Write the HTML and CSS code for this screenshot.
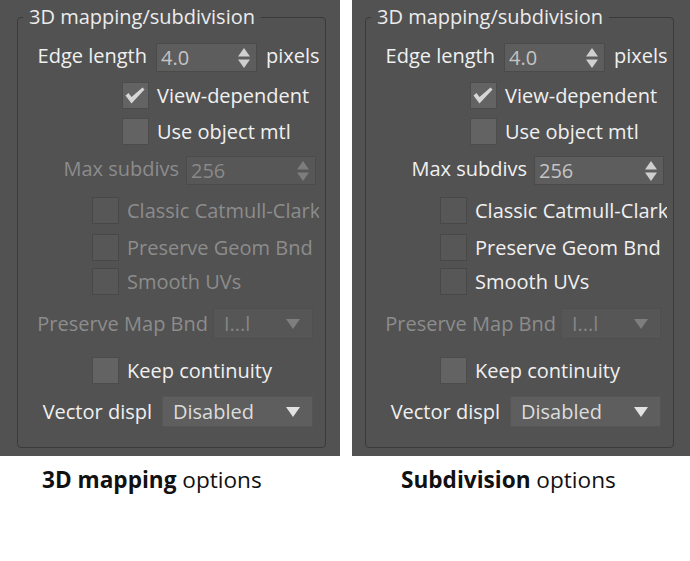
FILE: index.html
```html
<!DOCTYPE html>
<html>
<head>
<meta charset="utf-8">
<link rel="stylesheet" href="styles.css">
</head>
<body>
<div class="shots">
  <div class="panel p-left">
    <div class="group">
      <div class="legend">3D mapping/subdivision</div>
      <div class="row r1">
        <span class="lbl w-edge">Edge length</span>
        <div class="spin w-edge-sp"><span class="val">4.0</span>
          <svg class="arr" width="12" height="20" viewBox="0 0 12 20"><polygon points="0,8.5 6,0 12,8.5"/><polygon points="0,11.5 12,11.5 6,20"/></svg>
        </div>
        <span class="lbl unit">pixels</span>
      </div>
      <div class="row r2 in-top">
        <span class="cb"><svg width="27" height="27" viewBox="0 0 27 27"><path class="chk" d="M3.5 13.5 L6.5 11 L9.5 15 L20.5 5.5 L22.5 7.5 L9.5 21.5 Z"/></svg></span>
        <span class="lbl">View-dependent</span>
      </div>
      <div class="row r3 in-top">
        <span class="cb"></span>
        <span class="lbl">Use object mtl</span>
      </div>
      <div class="row r4 off">
        <span class="lbl w-max">Max subdivs</span>
        <div class="spin w-max-sp"><span class="val">256</span>
          <svg class="arr" width="12" height="20" viewBox="0 0 12 20"><polygon points="0,8.5 6,0 12,8.5"/><polygon points="0,11.5 12,11.5 6,20"/></svg>
        </div>
      </div>
      <div class="row r5 in-sub off">
        <span class="cb"></span>
        <span class="lbl">Classic Catmull-Clark</span>
      </div>
      <div class="row r6 in-sub off">
        <span class="cb"></span>
        <span class="lbl">Preserve Geom Bnd</span>
      </div>
      <div class="row r7 in-sub off">
        <span class="cb"></span>
        <span class="lbl">Smooth UVs</span>
      </div>
      <div class="row r8 off">
        <span class="lbl w-pmb">Preserve Map Bnd</span>
        <div class="dd w-pmb-dd"><span class="val">I...l</span>
          <svg class="tri" width="14" height="10" viewBox="0 0 14 10"><polygon points="0,0 14,0 7,10"/></svg>
        </div>
      </div>
      <div class="row r9 in-sub">
        <span class="cb"></span>
        <span class="lbl">Keep continuity</span>
      </div>
      <div class="row r10">
        <span class="lbl w-vd">Vector displ</span>
        <div class="dd w-vd-dd"><span class="val">Disabled</span>
          <svg class="tri" width="14" height="10" viewBox="0 0 14 10"><polygon points="0,0 14,0 7,10"/></svg>
        </div>
      </div>
    </div>
  </div>
  <div class="panel p-right">
    <div class="group">
      <div class="legend">3D mapping/subdivision</div>
      <div class="row r1">
        <span class="lbl w-edge">Edge length</span>
        <div class="spin w-edge-sp"><span class="val">4.0</span>
          <svg class="arr" width="12" height="20" viewBox="0 0 12 20"><polygon points="0,8.5 6,0 12,8.5"/><polygon points="0,11.5 12,11.5 6,20"/></svg>
        </div>
        <span class="lbl unit">pixels</span>
      </div>
      <div class="row r2 in-top">
        <span class="cb"><svg width="27" height="27" viewBox="0 0 27 27"><path class="chk" d="M3.5 13.5 L6.5 11 L9.5 15 L20.5 5.5 L22.5 7.5 L9.5 21.5 Z"/></svg></span>
        <span class="lbl">View-dependent</span>
      </div>
      <div class="row r3 in-top">
        <span class="cb"></span>
        <span class="lbl">Use object mtl</span>
      </div>
      <div class="row r4">
        <span class="lbl w-max">Max subdivs</span>
        <div class="spin w-max-sp"><span class="val">256</span>
          <svg class="arr" width="12" height="20" viewBox="0 0 12 20"><polygon points="0,8.5 6,0 12,8.5"/><polygon points="0,11.5 12,11.5 6,20"/></svg>
        </div>
      </div>
      <div class="row r5 in-sub">
        <span class="cb dim"></span>
        <span class="lbl">Classic Catmull-Clark</span>
      </div>
      <div class="row r6 in-sub">
        <span class="cb dim"></span>
        <span class="lbl">Preserve Geom Bnd</span>
      </div>
      <div class="row r7 in-sub">
        <span class="cb dim"></span>
        <span class="lbl">Smooth UVs</span>
      </div>
      <div class="row r8 off">
        <span class="lbl w-pmb">Preserve Map Bnd</span>
        <div class="dd w-pmb-dd"><span class="val">I...l</span>
          <svg class="tri" width="14" height="10" viewBox="0 0 14 10"><polygon points="0,0 14,0 7,10"/></svg>
        </div>
      </div>
      <div class="row r9 in-sub">
        <span class="cb"></span>
        <span class="lbl">Keep continuity</span>
      </div>
      <div class="row r10">
        <span class="lbl w-vd">Vector displ</span>
        <div class="dd w-vd-dd"><span class="val">Disabled</span>
          <svg class="tri" width="14" height="10" viewBox="0 0 14 10"><polygon points="0,0 14,0 7,10"/></svg>
        </div>
      </div>
    </div>
  </div>
</div>
<div class="captions">
  <p class="cap cap-left"><b>3D mapping</b> options</p>
  <p class="cap cap-right"><b>Subdivision</b> options</p>
</div>
</body>
</html>
```

FILE: styles.css
```css
* { box-sizing: border-box; }
html, body { margin: 0; padding: 0; background: #ffffff; }
body { font-family: "Open Sans", "Noto Sans", sans-serif; }

.shots { display: flex; gap: 12px; }
.panel { height: 456px; background: #525252; padding-top: 17px; overflow: hidden; }
.p-left { width: 340px; padding-left: 17px; }
.p-right { width: 338px; padding-left: 13px; }

.group {
  width: 309px;
  border: 1px solid #3a3a3a;
  border-radius: 4px;
  padding: 0 6px 20px 0;
  font-size: 20px;
  color: #f0f0f0;
}
.legend {
  display: table;
  margin: -12px 0 0 5px;
  padding: 0 6px;
  height: 22px;
  line-height: 22px;
  background: #525252;
  color: #ececec;
  white-space: nowrap;
}

.row { display: flex; align-items: center; overflow: hidden; white-space: nowrap; }
.lbl { line-height: 22px; flex: none; }
.row.off .lbl { color: #8c8c8c; }

.r1 { margin-top: 15px; height: 29px; }
.r2 { margin-top: 10px; height: 27px; }
.r3 { margin-top: 9px; height: 27px; }
.r4 { margin-top: 11px; height: 29px; }
.r5 { margin-top: 12px; height: 27px; }
.r6 { margin-top: 10px; height: 27px; }
.r7 { margin-top: 7px; height: 27px; }
.r8 { margin-top: 13px; height: 31px; }
.r9 { margin-top: 18px; height: 27px; }
.r10 { margin-top: 12px; height: 31px; }

.r1 .lbl, .r4 .lbl { padding-bottom: 3px; }

.in-top { padding-left: 104px; }
.in-sub { padding-left: 74px; }
.in-top .lbl, .in-sub .lbl { margin-left: 8px; }

.w-edge { width: 129px; text-align: right; margin-right: 9px; }
.w-max { width: 161px; text-align: right; margin-right: 7px; }
.w-pmb { width: 190px; text-align: right; margin-right: 5px; }
.w-vd { width: 134px; text-align: right; margin-right: 10px; }
.unit { margin-left: 9px; }

.spin {
  height: 29px;
  display: flex;
  align-items: center;
  justify-content: space-between;
  padding: 0 6px 0 4px;
  background: #5d5d5d;
  border: 1px solid #4a4a4a;
  flex: none;
}
.w-edge-sp { width: 101px; }
.w-max-sp { width: 130px; }
.spin .val { color: #c4c4c4; line-height: 22px; }
.arr { fill: #cfcfcf; display: block; }
.row.off .spin { background: #575757; border-color: #4b4b4b; }
.row.off .spin .val { color: #898989; }
.row.off .arr { fill: #7d7d7d; }

.dd {
  height: 31px;
  display: flex;
  align-items: center;
  justify-content: space-between;
  padding: 0 12px 0 10px;
  background: #5e5e5e;
  border: 1px solid #555555;
  flex: none;
}
.w-pmb-dd { width: 100px; }
.w-vd-dd { width: 151px; }
.dd .val { color: #dcdcdc; line-height: 22px; }
.tri { fill: #e2e2e2; display: block; }
.row.off .dd { background: #565656; border-color: #4f4f4f; }
.row.off .dd .val { color: #858585; }
.row.off .tri { fill: #7e7e7e; }

.cb {
  width: 27px;
  height: 27px;
  flex: none;
  background: #636363;
  border: 1px solid #4c4c4c;
  display: flex;
  align-items: center;
  justify-content: center;
}
.cb svg { display: block; margin: -1px; }
.chk { fill: #d6d6d6; }
.cb.dim, .row.off .cb { background: #575757; border-color: #484848; }

.captions { display: grid; grid-template-columns: 352px 338px; margin-top: 9px; }
.cap {
  margin: 0;
  font-family: "Open Sans", "Noto Sans", sans-serif;
  font-size: 22.6px;
  line-height: 30px;
  color: #111111;
  white-space: nowrap;
}
.cap b { font-weight: 700; }
.cap-left { padding-left: 42px; }
.cap-right { padding-left: 49px; }
```
